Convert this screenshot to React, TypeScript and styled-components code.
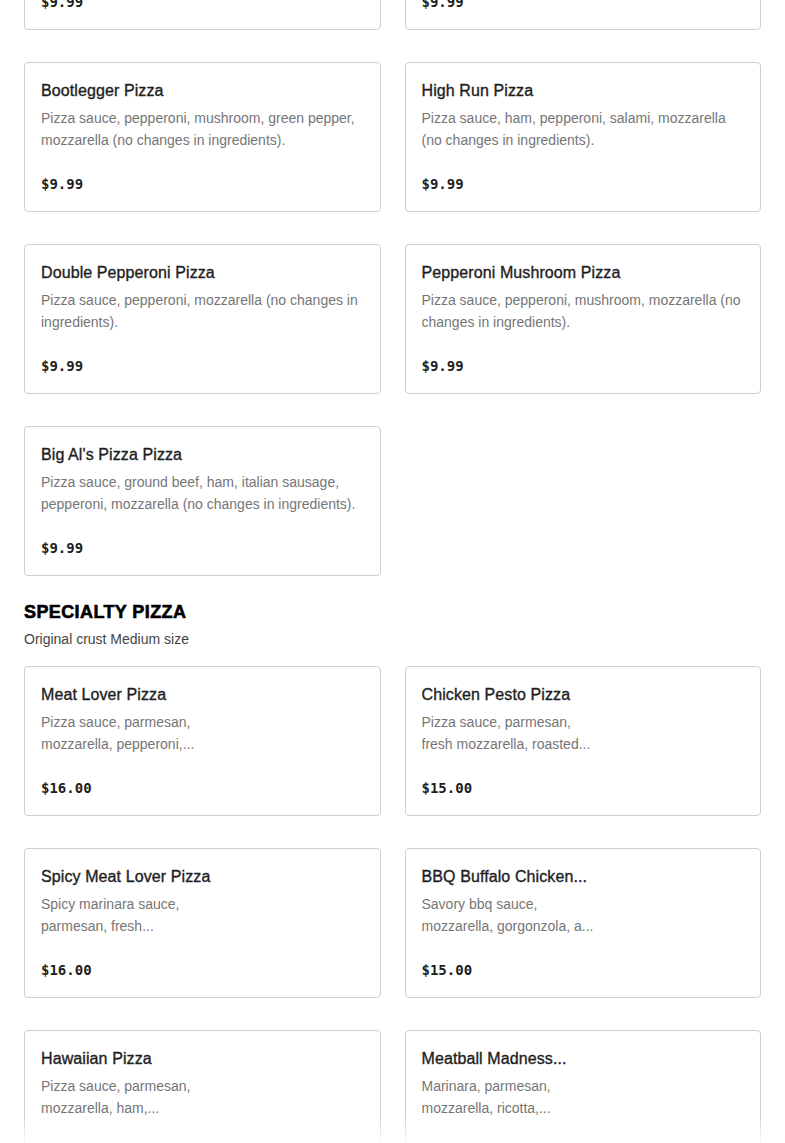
import React from "react";
import styled, { createGlobalStyle } from "styled-components";

const Global = createGlobalStyle`
  html, body { margin: 0; padding: 0; background: #fff; }
  body { font-family: "Liberation Sans", Arial, sans-serif; -webkit-font-smoothing: antialiased; }
`;

type Item = { name: string; desc: string; price: string };

const classic: Item[] = [
  { name: "Cheese Pizza", desc: "Pizza sauce, mozzarella (no changes in ingredients).", price: "$9.99" },
  { name: "Pepperoni Pizza", desc: "Pizza sauce, pepperoni, mozzarella (no changes in ingredients).", price: "$9.99" },
  { name: "Bootlegger Pizza", desc: "Pizza sauce, pepperoni, mushroom, green pepper, mozzarella (no changes in ingredients).", price: "$9.99" },
  { name: "High Run Pizza", desc: "Pizza sauce, ham, pepperoni, salami, mozzarella (no changes in ingredients).", price: "$9.99" },
  { name: "Double Pepperoni Pizza", desc: "Pizza sauce, pepperoni, mozzarella (no changes in ingredients).", price: "$9.99" },
  { name: "Pepperoni Mushroom Pizza", desc: "Pizza sauce, pepperoni, mushroom, mozzarella (no changes in ingredients).", price: "$9.99" },
  { name: "Big Al's Pizza Pizza", desc: "Pizza sauce, ground beef, ham, italian sausage, pepperoni, mozzarella (no changes in ingredients).", price: "$9.99" },
];

const specialty: Item[] = [
  { name: "Meat Lover Pizza", desc: "Pizza sauce, parmesan, mozzarella, pepperoni,...", price: "$16.00" },
  { name: "Chicken Pesto Pizza", desc: "Pizza sauce, parmesan, fresh mozzarella, roasted...", price: "$15.00" },
  { name: "Spicy Meat Lover Pizza", desc: "Spicy marinara sauce, parmesan, fresh...", price: "$16.00" },
  { name: "BBQ Buffalo Chicken...", desc: "Savory bbq sauce, mozzarella, gorgonzola, a...", price: "$15.00" },
  { name: "Hawaiian Pizza", desc: "Pizza sauce, parmesan, mozzarella, ham,...", price: "$15.00" },
  { name: "Meatball Madness...", desc: "Marinara, parmesan, mozzarella, ricotta,...", price: "$15.00" },
];

const Page = styled.main`
  padding: 0 24px 40px;
  margin-top: -120px;
  display: flex;
  flex-direction: column;
  gap: 24px;
`;

const Section = styled.section`
  display: flex;
  flex-direction: column;
`;

const SectionTitle = styled.h2`
  margin: 1px 0 0;
  font-family: "Liberation Sans", Arial, sans-serif;
  font-weight: 900;
  font-size: 18px;
  line-height: 22px;
  letter-spacing: 0.4px;
  color: #000;
  -webkit-text-stroke: 0.6px #000;
`;

const SectionSub = styled.p`
  margin: 6px 0 17px;
  font-size: 14px;
  line-height: 20px;
  color: #444;
`;

const Grid = styled.div`
  display: grid;
  grid-template-columns: 1fr 1fr;
  column-gap: 24px;
  row-gap: 32px;
`;

const Card = styled.article`
  box-sizing: border-box;
  height: 150px;
  border: 1px solid #cfcfcf;
  border-radius: 4px;
  padding: 16px;
  display: flex;
  flex-direction: column;
  background: #fff;
`;

const Name = styled.h3`
  margin: 0;
  font-size: 16px;
  line-height: 24px;
  font-weight: 400;
  color: #1e1e1e;
  -webkit-text-stroke: 0.35px #1e1e1e;
  letter-spacing: 0.1px;
  white-space: nowrap;
  overflow: hidden;
  text-overflow: ellipsis;
`;

const Desc = styled.p<{ $narrow?: boolean }>`
  margin: 4px 0 0;
  font-size: 14px;
  line-height: 22px;
  color: #767676;
  display: -webkit-box;
  -webkit-line-clamp: 2;
  -webkit-box-orient: vertical;
  overflow: hidden;
  max-width: ${(p) => (p.$narrow ? "176px" : "100%")};
`;

const Price = styled.div`
  margin-top: auto;
  margin-bottom: 1px;
  font-family: "DejaVu Sans Mono", "Liberation Mono", monospace;
  font-weight: 700;
  font-size: 14px;
  line-height: 20px;
  color: #1e1e1e;
`;

const Fade = styled.div`
  position: fixed;
  left: 0;
  right: 0;
  bottom: 0;
  height: 28px;
  background: linear-gradient(rgba(255, 255, 255, 0), rgba(255, 255, 255, 0.92));
  pointer-events: none;
`;

function MenuCard({ item, narrow }: { item: Item; narrow?: boolean }) {
  return (
    <Card>
      <Name>{item.name}</Name>
      <Desc $narrow={narrow}>{item.desc}</Desc>
      <Price>{item.price}</Price>
    </Card>
  );
}

export default function App() {
  return (
    <>
      <Global />
      <Page>
        <Grid>
          {classic.map((it) => (
            <MenuCard key={it.name} item={it} />
          ))}
        </Grid>
        <Section>
          <SectionTitle>SPECIALTY PIZZA</SectionTitle>
          <SectionSub>Original crust Medium size</SectionSub>
          <Grid>
            {specialty.map((it) => (
              <MenuCard key={it.name} item={it} narrow />
            ))}
          </Grid>
        </Section>
      </Page>
      <Fade />
    </>
  );
}
